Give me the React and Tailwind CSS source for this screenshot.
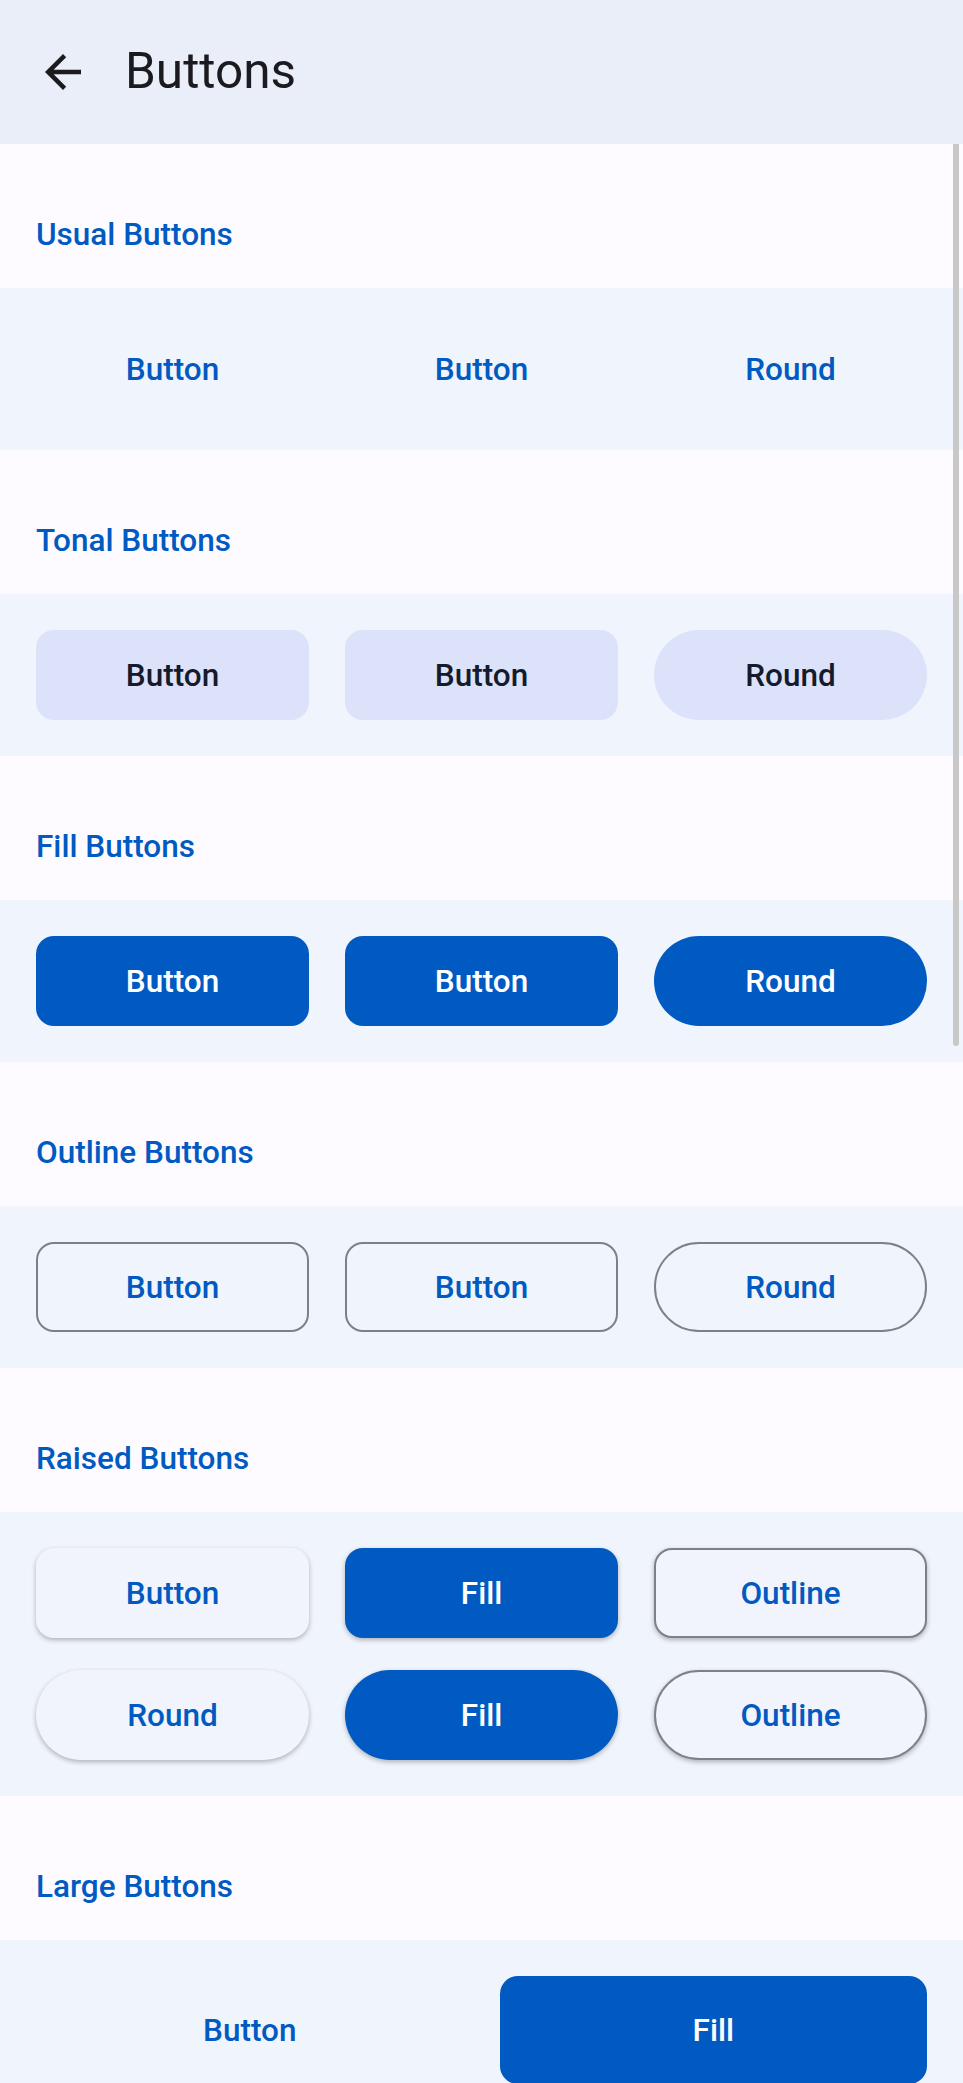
import React from "react";

const font = { fontFamily: "Roboto, 'Noto Sans', sans-serif" };

function SectionTitle({ children }) {
  return (
    <div className="h-[144px] px-[36px] pt-[75px]">
      <p className="text-[31.5px] leading-none font-medium text-[#005ac1]">
        {children}
      </p>
    </div>
  );
}

const base =
  "h-[90px] pt-[1px] flex items-center justify-center text-[31.5px] leading-none font-medium";

function Btn({ kind, round, children }) {
  const shape = round ? "rounded-full" : "rounded-[18px]";
  let look = "text-[#005ac1]";
  if (kind === "tonal") look = "bg-[#dce2f9] text-[#151b2c]";
  if (kind === "fill") look = "bg-[#005ac1] text-white";
  if (kind === "outline") look = "border-2 border-[#7d8088] text-[#005ac1]";
  if (kind === "raised")
    look = "bg-[#f1f4fc] text-[#005ac1] shadow-[0_2px_5px_rgba(0,0,0,0.28)]";
  if (kind === "raisedFill")
    look = "bg-[#005ac1] text-white shadow-[0_2px_5px_rgba(0,0,0,0.28)]";
  if (kind === "raisedOutline")
    look =
      "bg-[#f1f4fc] border-2 border-[#7d8088] text-[#005ac1] shadow-[0_2px_5px_rgba(0,0,0,0.28)]";
  return <button className={`${base} ${shape} ${look}`}>{children}</button>;
}

function Row({ children, gapY = false }) {
  return (
    <div
      className={`bg-[#f0f4fc] px-[36px] py-[36px] grid grid-cols-3 gap-x-[36px] ${
        gapY ? "gap-y-[32px]" : ""
      }`}
    >
      {children}
    </div>
  );
}

export default function App() {
  return (
    <div className="relative w-full min-h-screen bg-[#fdfbff]" style={font}>
      {/* top bar */}
      <div className="h-[144px] bg-[#e9eef9] flex items-center pl-[36px]">
        <svg width="54" height="54" viewBox="0 0 24 24" fill="#1b1b1f">
          <path d="M20 11H7.83l5.59-5.59L12 4l-8 8 8 8 1.41-1.41L7.83 13H20v-2z" />
        </svg>
        <h1 className="ml-[35px] text-[49.5px] leading-none font-normal text-[#1b1b1f]">
          Buttons
        </h1>
      </div>

      <SectionTitle>Usual Buttons</SectionTitle>
      <Row>
        <Btn>Button</Btn>
        <Btn>Button</Btn>
        <Btn round>Round</Btn>
      </Row>

      <SectionTitle>Tonal Buttons</SectionTitle>
      <Row>
        <Btn kind="tonal">Button</Btn>
        <Btn kind="tonal">Button</Btn>
        <Btn kind="tonal" round>
          Round
        </Btn>
      </Row>

      <SectionTitle>Fill Buttons</SectionTitle>
      <Row>
        <Btn kind="fill">Button</Btn>
        <Btn kind="fill">Button</Btn>
        <Btn kind="fill" round>
          Round
        </Btn>
      </Row>

      <SectionTitle>Outline Buttons</SectionTitle>
      <Row>
        <Btn kind="outline">Button</Btn>
        <Btn kind="outline">Button</Btn>
        <Btn kind="outline" round>
          Round
        </Btn>
      </Row>

      <SectionTitle>Raised Buttons</SectionTitle>
      <Row gapY>
        <Btn kind="raised">Button</Btn>
        <Btn kind="raisedFill">Fill</Btn>
        <Btn kind="raisedOutline">Outline</Btn>
        <Btn kind="raised" round>
          Round
        </Btn>
        <Btn kind="raisedFill" round>
          Fill
        </Btn>
        <Btn kind="raisedOutline" round>
          Outline
        </Btn>
      </Row>

      <SectionTitle>Large Buttons</SectionTitle>
      <div className="bg-[#f0f4fc] px-[36px] pt-[36px] pb-[36px] grid grid-cols-2 gap-x-[36px]">
        <button className="h-[108px] pt-[1px] flex items-center justify-center text-[31.5px] leading-none font-medium text-[#005ac1] rounded-[18px]">
          Button
        </button>
        <button className="h-[108px] pt-[1px] flex items-center justify-center text-[31.5px] leading-none font-medium text-white bg-[#005ac1] rounded-[18px]">
          Fill
        </button>
      </div>

      {/* scrollbar */}
      <div className="absolute right-[4px] top-[144px] w-[6px] h-[902px] bg-[#c8c8c8] rounded-b-[3px]" />
    </div>
  );
}
